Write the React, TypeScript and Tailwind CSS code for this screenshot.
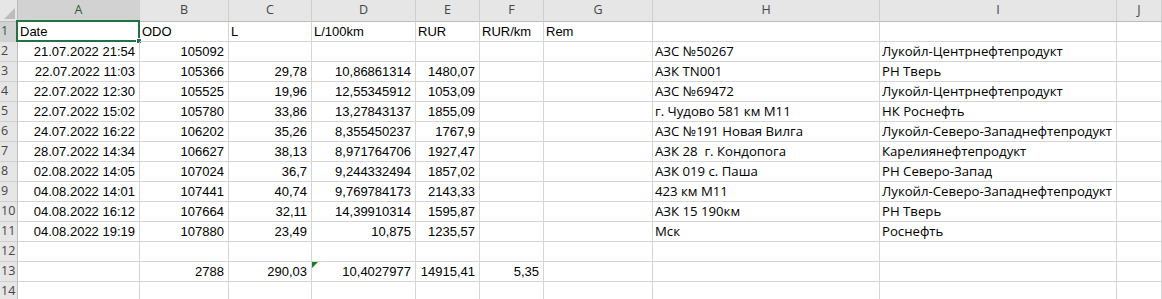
import React from "react";

const cols = ["A", "B", "C", "D", "E", "F", "G", "H", "I", "J"];

type Row = (string | null)[];

const data: Row[] = [
  ["Date", "ODO", "L", "L/100km", "RUR", "RUR/km", "Rem", "", ""],
  ["21.07.2022 21:54", "105092", "", "", "", "", "", "АЗС №50267", "Лукойл-Центрнефтепродукт"],
  ["22.07.2022 11:03", "105366", "29,78", "10,86861314", "1480,07", "", "", "АЗК TN001", "РН Тверь"],
  ["22.07.2022 12:30", "105525", "19,96", "12,55345912", "1053,09", "", "", "АЗС №69472", "Лукойл-Центрнефтепродукт"],
  ["22.07.2022 15:02", "105780", "33,86", "13,27843137", "1855,09", "", "", "г. Чудово 581 км М11", "НК Роснефть"],
  ["24.07.2022 16:22", "106202", "35,26", "8,355450237", "1767,9", "", "", "АЗС №191 Новая Вилга", "Лукойл-Северо-Западнефтепродукт"],
  ["28.07.2022 14:34", "106627", "38,13", "8,971764706", "1927,47", "", "", "АЗК 28  г. Кондопога", "Карелиянефтепродукт"],
  ["02.08.2022 14:05", "107024", "36,7", "9,244332494", "1857,02", "", "", "АЗК 019 с. Паша", "РН Северо-Запад"],
  ["04.08.2022 14:01", "107441", "40,74", "9,769784173", "2143,33", "", "", "423 км М11", "Лукойл-Северо-Западнефтепродукт"],
  ["04.08.2022 16:12", "107664", "32,11", "14,39910314", "1595,87", "", "", "АЗК 15 190км", "РН Тверь"],
  ["04.08.2022 19:19", "107880", "23,49", "10,875", "1235,57", "", "", "Мск", "Роснефть"],
  ["", "", "", "", "", "", "", "", ""],
  ["", "2788", "290,03", "10,4027977", "14915,41", "5,35", "", "", ""],
  ["", "", "", "", "", "", "", "", ""],
];

const arial = "font-['Liberation_Sans',Arial,sans-serif] text-[13px]";
const calibri = "font-['Open_Sans','Noto_Sans',sans-serif] text-[13.2px] whitespace-pre";

export default function App() {
  return (
    <div className="w-[1162px] h-[299px] overflow-hidden bg-white text-black">
      <div className="grid grid-cols-[18px_122px_89px_83px_104px_64px_64px_109px_227px_237px_1fr]">
        {/* Header row */}
        <div className="h-[22px] bg-[#e6e6e6] border-r border-b border-[#bcbcbc] relative">
          <svg className="absolute right-[2px] bottom-[2px]" width="11" height="11" viewBox="0 0 11 11">
            <polygon points="11,0 11,11 0,11" fill="#bcbcbc" />
          </svg>
        </div>
        {cols.map((c, i) => (
          <div
            key={c}
            className={
              "h-[22px] border-r border-[#cfcfcf] flex items-center justify-center text-[12.5px] font-['Open_Sans','Noto_Sans',sans-serif] " +
              (i === 0
                ? "bg-[#d2d2d2] text-[#1e5d36] border-b-2 border-b-[#217346]"
                : "bg-[#e6e6e6] text-[#444] border-b border-b-[#bcbcbc]")
            }
          >
            {c}
          </div>
        ))}
        {/* Data rows */}
        {data.map((row, r) => (
          <React.Fragment key={r}>
            <div
              className={
                "h-[20px] border-b border-[#cfcfcf] flex items-center pl-[1px] text-[12.5px] font-['Open_Sans','Noto_Sans',sans-serif] " +
                (r === 0
                  ? "bg-[#d2d2d2] text-[#1e5d36] border-r-2 border-r-[#217346]"
                  : "bg-[#e6e6e6] text-[#444] border-r border-r-[#bcbcbc]")
              }
            >
              {r + 1}
            </div>
            {Array.from({ length: 10 }).map((_, ci) => {
              const v = ci < 9 ? row[ci] ?? "" : "";
              const isText = r === 0 || ci >= 7;
              const font = ci >= 7 ? calibri : arial;
              const align = isText ? "justify-start pl-[2px]" : "justify-end pr-[4px]";
              return (
                <div
                  key={ci}
                  className={`h-[20px] border-r border-b border-[#d4d4d4] flex items-center whitespace-nowrap relative ${align} ${font}`}
                >
                  {v}
                  {r === 0 && ci === 0 && (
                    <div className="absolute left-[-2px] top-[-2px] w-[124px] h-[22px] border-2 border-[#217346] pointer-events-none">
                      <div className="absolute right-[-4px] bottom-[-4px] w-[6px] h-[6px] bg-[#217346] border border-white" />
                    </div>
                  )}
                  {r === 12 && ci === 3 && (
                    <svg className="absolute left-0 top-0" width="6" height="6" viewBox="0 0 6 6">
                      <polygon points="0,0 6,0 0,6" fill="#1b7d1b" />
                    </svg>
                  )}
                </div>
              );
            })}
          </React.Fragment>
        ))}
      </div>
    </div>
  );
}
